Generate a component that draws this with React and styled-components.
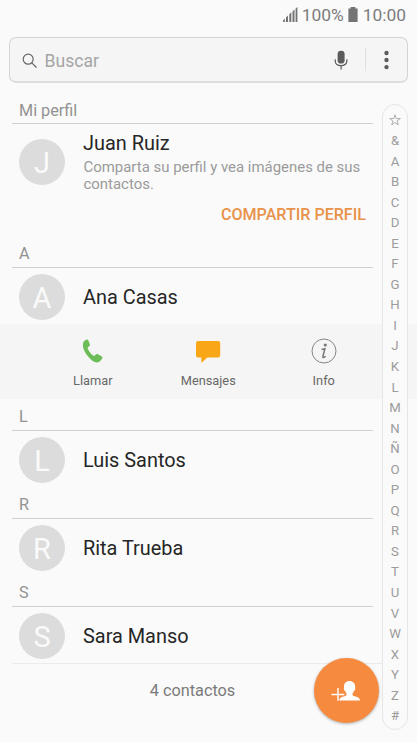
import styled, { createGlobalStyle } from 'styled-components';

const LETTERS = '&ABCDEFGHIJKLMNÑOPQRSTUVWXYZ#'.split('');

const App = () => {
  return (
    <Screen>
      <GlobalStyle />
      <StatusBar>
        <svg className="signal" width="15" height="15" viewBox="0 0 15 15">
          <path d="M0 15v-1.6l1.8-1.8V15zM3 15v-4.6l2-2V15zM6.3 15V7.2l2-2V15zM9.5 15V4.4l2-2V15zM12.6 15V1.6L14.4 0V15z" />
        </svg>
        <span className="percent">100%</span>
        <svg className="battery" width="10" height="15" viewBox="0 0 10 15">
          <path d="M2.6 0h4.8v1.6h2.2V15H.4V1.6h2.2z" />
        </svg>
        <span className="clock">10:00</span>
      </StatusBar>

      <SearchBar>
        <svg className="search" width="16" height="16" viewBox="0 0 16 16">
          <circle cx="6.2" cy="6.2" r="5" />
          <path d="M9.8 9.8l4.7 4.7" />
        </svg>
        <span className="placeholder">Buscar</span>
        <MicIcon />
        <span className="divider" />
        <svg className="more" width="5" height="20" viewBox="0 0 5 20">
          <circle cx="2.5" cy="3" r="2.2" />
          <circle cx="2.5" cy="10" r="2.2" />
          <circle cx="2.5" cy="17.1" r="2.2" />
        </svg>
      </SearchBar>

      <Content>
        <List>
          <ProfileTitle>Mi perfil</ProfileTitle>
          <Profile>
            <Avatar>J</Avatar>
            <div className="info">
              <Name>Juan Ruiz</Name>
              <p className="desc">
                Comparta su perfil y vea imágenes de sus contactos.
              </p>
              <button className="btn-share">COMPARTIR PERFIL</button>
            </div>
          </Profile>

          <Contact letter="A" name="Ana Casas" />
          <Actions>
            <Action>
              <PhoneIcon />
              <span>Llamar</span>
            </Action>
            <Action>
              <svg width="26" height="26" viewBox="0 0 26 26">
                <path
                  fill="#f9a716"
                  d="M3 3h20.200a2 2 0 0 1 2 2v12.500a2 2 0 0 1-2 2H12.400L6.300 25v-5.500H3a2 2 0 0 1-2-2V5a2 2 0 0 1 2-2z"
                />
              </svg>
              <span>Mensajes</span>
            </Action>
            <Action>
              <InfoIcon />
              <span>Info</span>
            </Action>
          </Actions>
          <Contact letter="L" name="Luis Santos" />
          <Contact letter="R" name="Rita Trueba" />
          <Contact letter="S" name="Sara Manso" />
          <Footer>4 contactos</Footer>
        </List>

        <LetterIndex>
          <svg width="12" height="12" viewBox="0 0 12 12">
            <path d="M6 .8l1.3 3.8h4L8.1 7l1.2 3.9L6 8.5l-3.3 2.4L3.9 7 .7 4.6h4z" />
          </svg>
          {LETTERS.map((letter) => (
            <span key={letter}>{letter}</span>
          ))}
        </LetterIndex>
      </Content>

      <AddButton aria-label="Crear contacto">
        <svg width="30" height="22" viewBox="0 0 30 22">
          <path
            fill="#fff"
            d="M18.4 1c3.5 0 5.7 2.2 5.7 5.8 0 1.2.3 1.5 0 2.6-.2.8-.7.9-1 1.7-.4 1.2-1.6 1.8-1.6 3.1 0 1.4 1.3 1.8 3 2.4 2.5.8 4.1 1.4 4.5 3.8H8.2c.4-2.4 2-3 4.4-3.8 1.8-.6 3-1 3-2.4 0-1.3-1.2-1.9-1.6-3.1-.3-.8-.8-.9-1-1.7-.3-1.1 0-1.4 0-2.6C13 3.2 15 1 18.4 1z"
          />
          <path stroke="#fff" strokeWidth="1.4" d="M.6 14.500h12.800M7 8.100v12.600" />
        </svg>
      </AddButton>
    </Screen>
  );
};

const Contact = ({ letter, name }) => (
  <>
    <SectionTitle>{letter}</SectionTitle>
    <Row>
      <Avatar>{letter}</Avatar>
      <Name>{name}</Name>
    </Row>
  </>
);

const MicIcon = () => (
  <svg className="mic" width="14" height="20" viewBox="0 0 14 20">
    <rect x="3.6" y=".8" width="7" height="12.8" rx="3.4" fill="#5c5c5c" />
    <path
      fill="none"
      stroke="#5c5c5c"
      strokeWidth="1.2"
      d="M1.2 9.2v1.2c0 3.2 2.4 5.2 5.9 5.2s5.8-2 5.8-5.2V9.2M7.1 15.6v4"
    />
  </svg>
);

const PhoneIcon = () => (
  <svg width="26" height="26" viewBox="0 0 26 26">
    <path
      fill="#6cbc58"
      d="M3.1 5.2C3.6 3.2 5 1.8 7 1.5c.7-.1 1.1.2 1.3.8l1.5 4c.3.8.1 1.4-.5 1.9L8.2 9.1c-.6.5-.7 1-.3 1.8 1.3 2.8 3.1 5 5.2 6.6.7.5 1.2.5 1.7 0l1.2-1c.6-.5 1.2-.6 1.9-.2l3.900 2.300c.7.4.9 1 .5 1.700-1.200 2.300-3.100 4-5.300 4.100-2.600.1-6.200-2.500-9.500-6.700C4.300 13.500 2.200 9 3.100 5.200z"
    />
  </svg>
);

const InfoIcon = () => (
  <svg width="26" height="26" viewBox="0 0 26 26">
    <circle cx="13" cy="13" r="12" fill="none" stroke="#858585" />
    <circle cx="14.3" cy="7" r="1.6" fill="#777" />
    <path
      fill="none"
      stroke="#777"
      strokeWidth="1.5"
      d="M10.6 11.4l3.3-.6-2 7.7c-.3 1.3.9 1.3 2.8-.3"
    />
  </svg>
);

const GlobalStyle = createGlobalStyle`
  * {
    box-sizing: border-box;
  }

  body {
    margin: 0;
    background-color: #fafafa;
    font-family: Roboto, sans-serif;
  }
`;

const Screen = styled.div`
  position: relative;
  width: 417px;
  height: 742px;
  overflow: hidden;
  background-color: #fafafa;
`;

const StatusBar = styled.div`
  height: 37px;
  display: flex;
  justify-content: flex-end;
  padding: 7px 11px 0 0;
  color: #7c7c7c;
  font-size: 17.4px;
  line-height: 17px;

  svg {
    fill: #747474;
  }
  .signal {
    margin-right: 4px;
  }
  .percent {
    width: 44px;
  }
  .battery {
    margin: 0 5px 0 2px;
  }
`;

const SearchBar = styled.div`
  height: 46px;
  margin: 0 9px;
  display: flex;
  align-items: center;
  padding: 0 18.5px 0 12px;
  background-color: #f5f5f5;
  border: 1px solid #d4d4d4;
  border-bottom: 2px solid #dedede;
  border-radius: 7px;

  .search {
    margin-top: 2px;
    fill: none;
    stroke: #666;
    stroke-width: 1.2;
  }
  .placeholder {
    flex: 1;
    margin: 2px 0 0 6.5px;
    color: #a5a5a5;
    font-size: 17.6px;
  }
  .divider {
    width: 1px;
    height: 23px;
    margin: 0 18px 0 17px;
    background-color: #e0e0e0;
  }
  .more {
    margin-top: 1px;
    fill: #5c5c5c;
  }
`;

const Content = styled.div`
  display: flex;
  align-items: flex-start;
  background: linear-gradient(#f5f5f5, #f5f5f5) 0 241px / 100% 75px no-repeat;
`;

const List = styled.div`
  width: 382px;
  padding-top: 9px;
`;

const SectionTitle = styled.div`
  height: 32px;
  margin: 0 9px 0 12px;
  padding: 7px 7px 0;
  border-bottom: 1px solid #d0d0d0;
  color: #929292;
  font-size: 16.2px;
  line-height: 21px;
`;

const ProfileTitle = styled(SectionTitle)`
  padding-top: 8px;
`;

const Row = styled.div`
  height: 56px;
  display: flex;
  align-items: center;
  padding: 2px 0 0 19px;
`;

const Profile = styled.div`
  height: 112px;
  display: flex;
  padding: 15px 16px 0 19px;

  .info {
    flex: 1;
    display: flex;
    flex-direction: column;
    margin-top: -8px;
  }
  .desc {
    margin: 3px -6px 0 18.5px;
    color: #9b9b9b;
    font-size: 14.95px;
    line-height: 17px;
  }
  .btn-share {
    align-self: flex-end;
    margin-top: 12px;
    padding: 0;
    border: none;
    background: none;
    color: #e8924a;
    font-family: inherit;
    font-size: 16.1px;
    font-weight: 500;
    line-height: 20px;
  }
`;

const Avatar = styled.div`
  width: 46px;
  height: 46px;
  flex-shrink: 0;
  border-radius: 50%;
  background-color: #dcdcdc;
  color: #fafafa;
  font-size: 29px;
  line-height: 48px;
  text-align: center;
`;

const Name = styled.div`
  margin-left: 18px;
  color: #262626;
  font-size: 19.9px;
  line-height: 25px;
`;

const Actions = styled.div`
  height: 75px;
  display: flex;
  padding-left: 35px;
`;

const Action = styled.div`
  width: 115.5px;
  display: flex;
  flex-direction: column;
  align-items: center;
  padding-top: 14px;

  span {
    margin-top: 9px;
    color: #686868;
    font-size: 12.8px;
    line-height: 16px;
  }
`;

const Footer = styled.div`
  height: 54px;
  margin-left: 12px;
  padding-right: 9px;
  border-top: 1px solid #ebebeb;
  color: #7a7a7a;
  font-size: 16.3px;
  line-height: 53px;
  text-align: center;
`;

const LetterIndex = styled.div`
  width: 26px;
  height: 626px;
  display: flex;
  flex-direction: column;
  align-items: center;
  margin-top: 21px;
  padding-top: 5px;
  border: 1px solid #e6e6e6;
  border-radius: 13px;
  background-color: #fafafa;
  color: #9c9c9c;
  font-size: 13.2px;

  svg {
    margin: 4px 0;
    flex-shrink: 0;
    fill: none;
    stroke: #9c9c9c;
    stroke-width: 0.8;
  }
  span {
    height: 20.55px;
    line-height: 21px;
  }
`;

const AddButton = styled.button`
  position: absolute;
  left: 314px;
  top: 658px;
  width: 65px;
  height: 65px;
  display: flex;
  align-items: center;
  justify-content: center;
  padding: 1px 1px 0 0;
  border: none;
  border-radius: 50%;
  background-color: #f68b3f;
  box-shadow: 0 1px 3px rgba(0, 0, 0, 0.3);
`;

export default App;
